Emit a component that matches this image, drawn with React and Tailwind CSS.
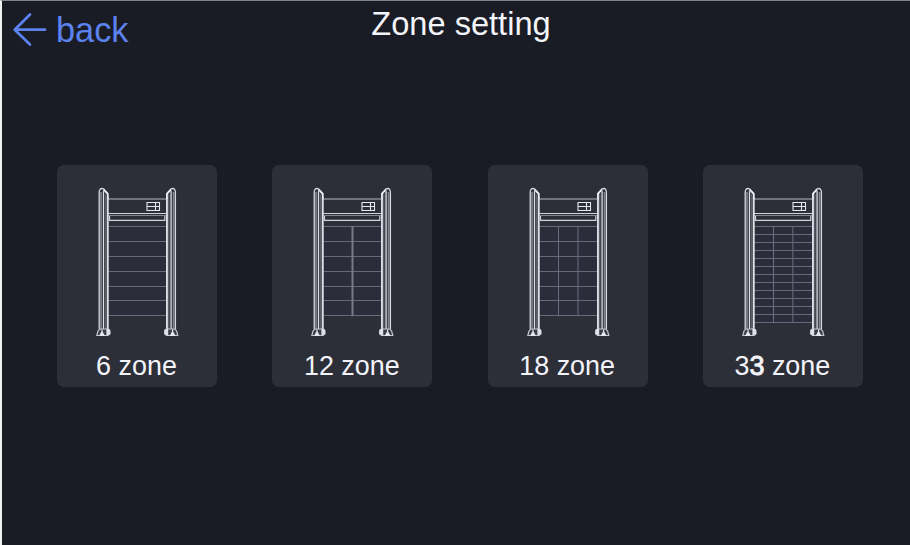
const zones = [
  { count: '6', rows: 6, step: 14.95, columns: [] },
  { count: '12', rows: 6, step: 14.95, columns: [42.5], thick: true },
  { count: '18', rows: 6, step: 14.95, columns: [32.5, 52] },
  { count: '33', rows: 12, step: 8.04, columns: [32.5, 51.8] },
];

function Post() {
  return (
    <g fill="none">
      <path d="M4.2 142V5.5Q4.2 1.5 7 1.5Q9 1.5 10.5 4L12.7 6.5V142" stroke="#d6d8e0" strokeWidth="1.3" />
      <path d="M8.5 2.5L12.7 6.8V12" stroke="#eceef4" strokeWidth="1.7" />
      <path d="M6 142V5" stroke="#858893" strokeWidth="1.6" />
      <path d="M8.5 142V4" stroke="#dcdee5" strokeWidth="1.3" />
      <path d="M10.8 142V7" stroke="#666974" strokeWidth="1.2" />
      <path d="M12.7 142V10" stroke="#e0e2e8" strokeWidth="1.7" />
      <path d="M1.8 148.5L3 144Q4 142 6 142H13Q15.5 143 15 147L13 148.5Z" fill="#3c3e48" stroke="#c4c6cf" strokeWidth="1.2" />
      <path d="M12 142.5V148L14.5 146.5V143Z" fill="#e0e2e9" stroke="#e0e2e9" strokeWidth="1.2" />
      <path d="M7 142.5V147M5 148.3L7 144.8L9 148.3Z" fill="#e5e7ed" stroke="#e5e7ed" strokeWidth="1.2" />
    </g>
  );
}

function Gate({ rows, step, columns, thick }) {
  const bottom = 39.5 + rows * step;
  return (
    <svg width="84" height="152" viewBox="0 0 84 152" aria-hidden="true">
      <rect x="13" y="39" width="58" height={bottom - 39} fill="#2c2d3b" />
      <g stroke="#676a79" strokeWidth="1">
        {Array.from({ length: rows + 1 }, (_, i) => (
          <path key={i} d={`M13 ${Math.floor(39.2 + i * step) + 0.5}H71`} />
        ))}
      </g>
      {columns.map((x) => (
        <path key={x} d={`M${x} 39V${bottom}`} stroke={thick ? '#777a87' : '#6a6c80'} strokeWidth={thick ? 2 : 1} />
      ))}
      <g fill="none" stroke="#b5b8c1">
        <path d="M13 12H71" />
        <path d="M13 26.5H71" stroke="#d2d4db" />
        <path d="M13 28.5H71" stroke="#848792" />
        <path d="M14.5 29V33.3H69.8V29" stroke="#cfd1d8" strokeWidth="1.2" />
        <path d="M52 15.5H64.5V23.5H52ZM52 19.5H64.5M60.5 15.5V23.5" stroke="#e6e8ed" strokeWidth="1.1" />
      </g>
      <Post />
      <g transform="translate(84.6 0) scale(-1 1)">
        <Post />
      </g>
    </svg>
  );
}

export default function App() {
  return (
    <main className="h-[545px] w-[910px] overflow-hidden border-l-2 border-t border-l-[#f0f1f3] border-t-[#7d848a] bg-[#191c24] font-['Liberation_Sans',Arial,sans-serif]">
      <header className="grid h-[164px] grid-cols-[1fr_180px_1fr] items-start pl-[10px]">
        <button className="mt-[10px] flex h-[38px] w-max items-center gap-[8px] text-[34.3px] leading-[38px] text-[#5c82ef]">
          <svg width="36" height="38" viewBox="0 0 36 38" fill="none" stroke="currentColor" strokeWidth="2.7" strokeLinecap="round" strokeLinejoin="round" aria-hidden="true">
            <path d="M18 3.5L2.7 18.7L18 33.5M3 18.7H33" />
          </svg>
          <span>back</span>
        </button>
        <h1 className="mt-[4px] whitespace-nowrap text-center text-[32.6px] leading-[38px] text-[#f3f4fa]">Zone setting</h1>
      </header>
      <section className="ml-[55px] flex gap-[55.3px]">
        {zones.map((zone) => (
          <button key={zone.count} className="flex h-[222px] w-[160px] shrink-0 flex-col items-center rounded-[7px] bg-[#2d2f38] pt-[22px]">
            <Gate {...zone} />
            <span className="mt-[12px] whitespace-nowrap pr-[1px] text-[26.9px] leading-[30px] text-[#f3f4fa]">
              {zone.count === '33' ? <>3<span className="[-webkit-text-stroke:0.9px]">3</span></> : zone.count} zone
            </span>
          </button>
        ))}
      </section>
    </main>
  );
}
